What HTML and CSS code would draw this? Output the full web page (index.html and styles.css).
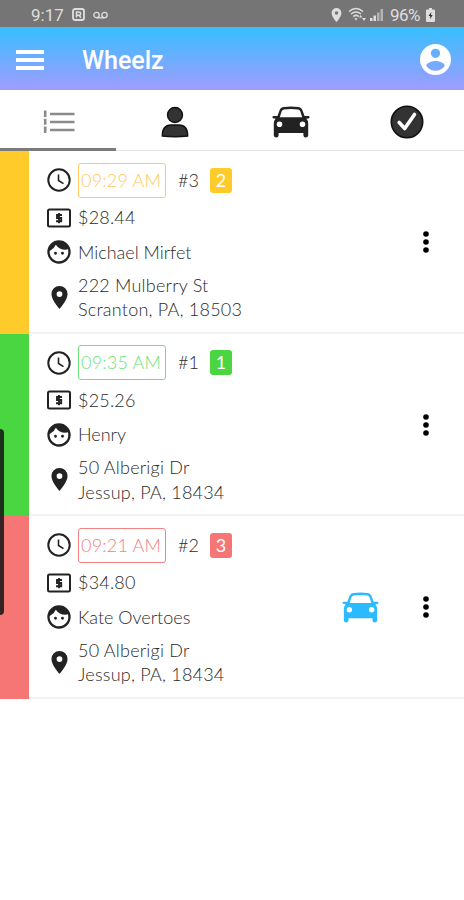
FILE: index.html
```html
<!DOCTYPE html>
<html lang="en">
<head>
    <meta charset="UTF-8">
    <meta name="viewport" content="width=device-width, initial-scale=1.0">
    <title>Wheelz</title>
    <link rel="stylesheet" href="styles.css">
</head>
<body>
    <!-- Shared icons -->
    <svg class="icon-defs" width="0" height="0">
        <symbol id="icon-clock" viewBox="0 0 24 24">
            <circle cx="12" cy="12" r="10.7" fill="none" stroke="currentColor" stroke-width="2"/>
            <path d="M11.5 6.5v6l5 3.2" fill="none" stroke="currentColor" stroke-width="1.6"/>
        </symbol>
        <symbol id="icon-money" viewBox="0 0 24 20">
            <rect x="1" y="1.5" width="22" height="17" rx="1.5" fill="none" stroke="currentColor" stroke-width="2"/>
            <path d="M15 7H10v3h4.2v3.3H9M12 5v10.2" fill="none" stroke="currentColor" stroke-width="1.9"/>
        </symbol>
        <symbol id="icon-face" viewBox="0 0 24 24">
            <path d="M9 11.75a1.25 1.25 0 1 0 0 2.5 1.25 1.25 0 0 0 0-2.5zm6 0a1.25 1.25 0 1 0 0 2.5 1.25 1.25 0 0 0 0-2.5zM12 2a10 10 0 1 0 0 20 10 10 0 0 0 0-20zm0 18a8 8 0 0 1-7.95-8.86 10.05 10.05 0 0 0 5.21-5.37A9.97 9.97 0 0 0 17.42 10c.78 0 1.53-.09 2.25-.26A8 8 0 0 1 12 20z" fill="currentColor"/>
        </symbol>
        <symbol id="icon-pin" viewBox="5 2 14 20">
            <path d="M12 2a7 7 0 0 0-7 7c0 5.25 7 13 7 13s7-7.75 7-13a7 7 0 0 0-7-7zm0 9.5a2.5 2.5 0 1 1 0-5 2.5 2.5 0 0 1 0 5z" fill="currentColor"/>
        </symbol>
        <symbol id="icon-car" viewBox="0 0 38 32">
            <path fill-rule="evenodd" fill="currentColor" d="M12 1Q19 0 26 1Q29.500 1.400 30.500 4.500L32.600 10H36.500Q38 10.200 37.500 11.700Q37 12.700 34.300 12.800Q36.200 14.500 36.200 17.500V29.500Q36 31.500 33.800 31.500Q31.400 31.500 31.400 29.300V27H6.600V29.300Q6.600 31.500 4.200 31.500Q2 31.500 1.800 29.500V17.500Q1.800 14.500 3.700 12.800Q1 12.700 .5 11.700Q0 10.200 1.500 10H5.400L7.500 4.500Q8.500 1.400 12 1ZM11.800 3.500Q10.200 3.800 9.600 5.500L7.800 11.300H30.200L28.400 5.500Q27.800 3.800 26.200 3.500Q19 2.700 11.800 3.500ZM7.500 15.500A2.800 2.800 0 1 0 7.500 21.100A2.800 2.800 0 1 0 7.500 15.500ZM30.500 15.500A2.800 2.800 0 1 0 30.500 21.100A2.800 2.800 0 1 0 30.500 15.500Z"/>
        </symbol>
        <symbol id="icon-dots" viewBox="0 0 6 22">
            <circle cx="3" cy="3" r="2.8"/>
            <circle cx="3" cy="11" r="2.8"/>
            <circle cx="3" cy="19" r="2.8"/>
        </symbol>
    </svg>

    <!-- Status bar -->
    <div class="status-bar">
        <span class="status-time">9:17</span>
        <svg width="13" height="13" viewBox="0 0 13 13">
            <rect x="1" y="1" width="11" height="11" rx="2" fill="none" stroke="currentColor" stroke-width="1.8"/>
            <path d="M4.500 9.500V4h2.500a1.600 1.600 0 0 1 0 3.300H5M7 7.300l2 2.500" fill="none" stroke="currentColor" stroke-width="1.500"/>
        </svg>
        <svg class="status-mail" width="15" height="8" viewBox="0 0 15 8">
            <path d="M3.500 6.800h8" stroke="currentColor" stroke-width="1.300"/>
            <circle cx="3.500" cy="4" r="2.700" fill="none" stroke="currentColor" stroke-width="1.300"/>
            <circle cx="11.500" cy="4" r="2.700" fill="none" stroke="currentColor" stroke-width="1.300"/>
        </svg>
        <svg class="status-pin" width="11" height="14"><use href="#icon-pin"/></svg>
        <svg class="status-wifi" width="18" height="15" viewBox="0 0 18 15">
            <path d="M1 4.500Q8 -1.500 15 4.500M3 7Q8 3 13 7M5.200 9.500Q8 7.200 10.800 9.500" fill="none" stroke="currentColor" stroke-width="1.500"/>
            <path d="M6.300 11.200h3.400L8 13.500zM11 10.500l1.700-2.500 1.700 2.500zM14 11h4l-2 3z" fill="currentColor"/>
        </svg>
        <svg class="status-signal" width="13" height="13" viewBox="0 0 13 13">
            <path d="M0 10h2.500v3H0zM3.500 7.500H6V13H3.500z" fill="currentColor"/>
            <path d="M7 4.500h2.500V13H7zM10.500 1H13v12h-2.500z" fill="currentColor" opacity=".6"/>
        </svg>
        <span class="status-percent">96%</span>
        <svg width="9" height="14" viewBox="0 0 9 14">
            <path d="M3 0h3v1.500h2q1 0 1 1V13q0 1-1 1H1q-1 0-1-1V2.500q0-1 1-1h2z" fill="currentColor"/>
            <path d="M5.300 4L2.500 8H4.200V11l2.500-4H5z" fill="#333"/>
        </svg>
    </div>

    <!-- App header -->
    <header class="app-header">
        <div class="menu-button"><span></span><span></span><span></span></div>
        <h1>Wheelz</h1>
        <svg class="account" width="31" height="31" viewBox="2 2 20 20">
            <path d="M12 2a10 10 0 1 0 0 20 10 10 0 0 0 0-20zm0 3a3 3 0 1 1 0 6 3 3 0 0 1 0-6zm0 14.200a7.200 7.200 0 0 1-6-3.220c.03-1.990 4-3.080 6-3.080s5.970 1.090 6 3.080a7.200 7.200 0 0 1-6 3.220z" fill="#fff"/>
        </svg>
    </header>

    <!-- Tabs -->
    <nav class="tabs">
        <div class="tab active">
            <svg width="32" height="24" viewBox="0 0 32 24">
                <path d="M7 4h24.500M7 12h24.500M7 20h24.500" stroke="#8a8a8a" stroke-width="2.400"/>
                <path d="M2.200 .5v6.500M2.200 8.800v6M2.200 16.500v6.500" stroke="#8a8a8a" stroke-width="2.600"/>
            </svg>
        </div>
        <div class="tab">
            <svg width="28" height="32" viewBox="0 0 28 32">
                <circle cx="14" cy="9" r="7.500" fill="#333" stroke="#111" stroke-width="1.400"/>
                <path d="M1.300 30Q1.300 19 10 19h8q8.700 0 8.700 11-12.700 1.600-25.400 0z" fill="#333" stroke="#111" stroke-width="1.400"/>
            </svg>
        </div>
        <div class="tab">
            <svg class="tab-car" width="38" height="32"><use href="#icon-car"/></svg>
        </div>
        <div class="tab">
            <svg width="34" height="34" viewBox="0 0 34 34">
                <circle cx="17" cy="17" r="15.700" fill="#333" stroke="#111" stroke-width="1.600"/>
                <path d="M9.200 17.500l5.500 6L24.500 9.500" fill="none" stroke="#fff" stroke-width="3.600" stroke-linecap="round" stroke-linejoin="round"/>
            </svg>
        </div>
    </nav>

    <!-- Ride list -->
    <main class="rides">
        <div class="ride yellow">
            <div class="details">
                <svg width="24" height="24"><use href="#icon-clock"/></svg>
                <div class="time-row">
                    <span class="time">09:29 AM</span>
                    <span class="number">#3</span>
                    <span class="badge">2</span>
                </div>
                <svg width="24" height="20"><use href="#icon-money"/></svg>
                <div class="price">$28.44</div>
                <svg width="28" height="28"><use href="#icon-face"/></svg>
                <div class="name">Michael Mirfet</div>
                <svg width="17" height="23"><use href="#icon-pin"/></svg>
                <div class="address">222 Mulberry St<br>Scranton, PA, 18503</div>
            </div>
            <div class="actions">
                <svg width="6" height="22"><use href="#icon-dots"/></svg>
            </div>
        </div>

        <div class="ride green">
            <div class="details">
                <svg width="24" height="24"><use href="#icon-clock"/></svg>
                <div class="time-row">
                    <span class="time">09:35 AM</span>
                    <span class="number">#1</span>
                    <span class="badge">1</span>
                </div>
                <svg width="24" height="20"><use href="#icon-money"/></svg>
                <div class="price">$25.26</div>
                <svg width="28" height="28"><use href="#icon-face"/></svg>
                <div class="name">Henry</div>
                <svg width="17" height="23"><use href="#icon-pin"/></svg>
                <div class="address">50 Alberigi Dr<br>Jessup, PA, 18434</div>
            </div>
            <div class="actions">
                <svg width="6" height="22"><use href="#icon-dots"/></svg>
            </div>
        </div>

        <div class="ride red">
            <div class="details">
                <svg width="24" height="24"><use href="#icon-clock"/></svg>
                <div class="time-row">
                    <span class="time">09:21 AM</span>
                    <span class="number">#2</span>
                    <span class="badge">3</span>
                </div>
                <svg width="24" height="20"><use href="#icon-money"/></svg>
                <div class="price">$34.80</div>
                <svg width="28" height="28"><use href="#icon-face"/></svg>
                <div class="name">Kate Overtoes</div>
                <svg width="17" height="23"><use href="#icon-pin"/></svg>
                <div class="address">50 Alberigi Dr<br>Jessup, PA, 18434</div>
            </div>
            <div class="actions">
                <svg class="on-the-way" width="37" height="31"><use href="#icon-car"/></svg>
                <svg width="6" height="22"><use href="#icon-dots"/></svg>
            </div>
        </div>
    </main>

    <!-- Edge panel handle -->
    <div class="edge-handle"></div>
</body>
</html>
```
FILE: styles.css
```css
* {
    box-sizing: border-box;
}

body {
    margin: 0;
    height: 900px;
    position: relative;
    overflow: hidden;
    background-color: #fff;
    color: #2b2b2b;
    font-family: Lato, sans-serif;
    font-weight: 300;
}

svg {
    display: block;
    flex-shrink: 0;
}

.icon-defs {
    position: absolute;
}

/* Status bar */
.status-bar {
    display: flex;
    align-items: center;
    height: 27px;
    padding: 2px 29px 0 31px;
    background-color: #757575;
    color: #dedede;
    font-family: Roboto, sans-serif;
    font-size: 17px;
    font-weight: 400;
}

.status-time {
    width: 41px;
}

.status-mail {
    margin-left: 8px;
}

.status-pin {
    margin-left: auto;
}

.status-wifi {
    margin-left: 6px;
}

.status-signal {
    margin-left: 4px;
}

.status-percent {
    width: 32px;
    margin: 0 4px 0 7px;
    letter-spacing: -0.5px;
}

/* Header */
.app-header {
    display: flex;
    align-items: center;
    height: 63px;
    padding: 2px 13px 0 16px;
    background: linear-gradient(#36bfff, #a09cff);
}

.menu-button {
    display: flex;
    flex-direction: column;
    gap: 4px;
    width: 28px;
}

.menu-button span {
    height: 4px;
    background-color: #fff;
}

.app-header h1 {
    margin: 2px 0 0 38px;
    color: #fff;
    font-family: Roboto, sans-serif;
    font-size: 25px;
    font-weight: 500;
}

.account {
    margin-left: auto;
}

/* Tabs */
.tabs {
    display: grid;
    grid-template-columns: repeat(4, 1fr);
    height: 61px;
    border-bottom: 1px solid #e4e4e4;
}

.tab {
    display: flex;
    align-items: center;
    justify-content: center;
    height: 61px;
    padding: 2px 0 0 1px;
}

.tab.active {
    padding-top: 5px;
    border-bottom: 3px solid #7b7b7b;
}

.tab-car {
    color: #222;
}

/* Rides */
.ride {
    display: flex;
    height: 182.5px;
    border-left: 29px solid var(--color);
    box-shadow: inset 0 -2px #f3f3f3;
}

.yellow {
    --color: #ffcb2b;
    --outline: #ffc861;
}

.green {
    --color: #49d640;
    --outline: #70e27a;
}

.red {
    --color: #f67575;
    --outline: #f58080;
}

.details {
    display: grid;
    grid-template-columns: 24px 1fr;
    grid-template-rows: 34px 41px 28px 62px;
    column-gap: 7px;
    align-items: center;
    justify-items: start;
    padding: 12px 0 0 18px;
    font-size: 18px;
    line-height: 24.5px;
}

.details > svg {
    justify-self: center;
    color: #222;
}

.time-row {
    display: flex;
    align-items: center;
    white-space: nowrap;
}

.time {
    width: 88px;
    height: 35px;
    padding-left: 2px;
    border: 1px solid var(--outline);
    border-radius: 3px;
    color: var(--outline);
    line-height: 32px;
    letter-spacing: 0.2px;
}

.number {
    width: 32px;
    margin-left: 12px;
}

.badge {
    width: 22px;
    height: 25px;
    border-radius: 3px;
    background-color: var(--color);
    color: #fff;
    font-weight: 400;
    text-align: center;
}

.price {
    letter-spacing: 0.2px;
}

.address {
    letter-spacing: 0.22px;
}

.actions {
    display: flex;
    align-items: center;
    gap: 44px;
    margin-left: auto;
    padding-right: 35px;
    color: #111;
}

.on-the-way {
    color: #2bb9ff;
}

/* Dark handle at the left screen edge */
.edge-handle {
    position: absolute;
    left: 0;
    top: 429px;
    width: 4px;
    height: 186px;
    border-radius: 0 4px 4px 0;
    background-color: rgba(20, 20, 20, 0.85);
}
```
